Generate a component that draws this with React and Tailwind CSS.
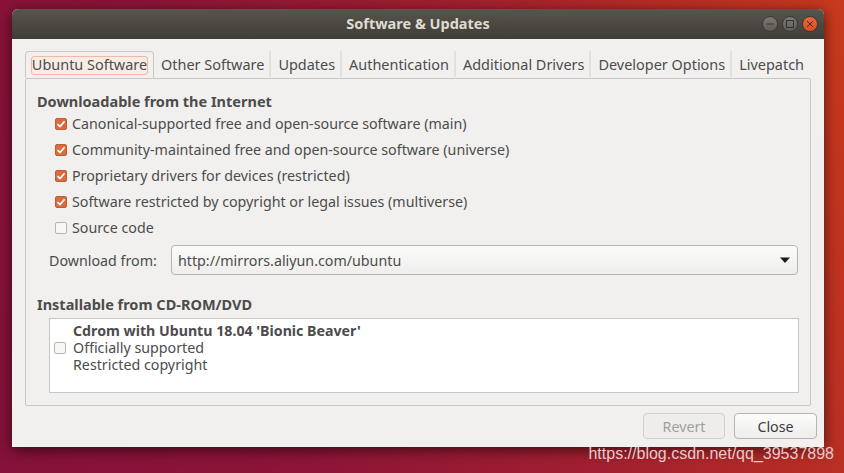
const tabs = ["Other Software", "Updates", "Authentication", "Additional Drivers", "Developer Options", "Livepatch"];

const sources = [
  { label: "Canonical-supported free and open-source software (main)", checked: true },
  { label: "Community-maintained free and open-source software (universe)", checked: true },
  { label: "Proprietary drivers for devices (restricted)", checked: true },
  { label: "Software restricted by copyright or legal issues (multiverse)", checked: true },
  { label: "Source code", checked: false },
];

function Checkbox({ checked }) {
  if (!checked) {
    return <span className="block w-[12px] h-[12px] shrink-0 rounded-[2px] border border-[#b9b6b0] bg-[#f8f7f6]" />;
  }
  return (
    <span className="flex items-center justify-center w-[12px] h-[12px] shrink-0 rounded-[2px] border border-[#b5623c] bg-[#e0693a]">
      <svg width="10" height="10" viewBox="0 0 10 10" fill="none">
        <path d="M1.5 5.2 L4 7.6 L8.6 2.2" stroke="#fff" strokeWidth="1.7" />
      </svg>
    </span>
  );
}

function WindowButton({ close, children }) {
  return (
    <span className={close
      ? "flex items-center justify-center w-[16px] h-[16px] rounded-full border border-[#3d3b35] bg-gradient-to-b from-[#f0643a] to-[#dc4f22]"
      : "flex items-center justify-center w-[16px] h-[16px] rounded-full border border-[#3d3b35] bg-gradient-to-b from-[#7b7972] to-[#5f5d56]"}>
      <svg width="10" height="10" viewBox="0 0 10 10" fill="none" stroke="#34322d" strokeWidth="1">
        {children}
      </svg>
    </span>
  );
}

export default function App() {
  return (
    <div
      className="relative w-[844px] h-[473px] overflow-hidden pt-[9px] px-[12px] bg-[linear-gradient(72deg,#86113a_0%,#8c1438_30%,#a3202f_62%,#bf3320_90%,#c83a1c_100%)] text-[14.25px] text-[#4c4c4c]"
      style={{ fontFamily: '"Noto Sans", sans-serif' }}
    >
      <div className="flex flex-col w-[812px] h-[438px] rounded-t-[6px] bg-[#f1f0ee] shadow-[0_3px_14px_rgba(0,0,0,0.6)]">
        {/* titlebar */}
        <div className="relative flex items-center justify-center h-[30px] shrink-0 rounded-t-[6px] bg-gradient-to-b from-[#57554c] to-[#3f3d37]">
          <span className="text-[14.5px] font-bold text-[#dfdbd2]">Software &amp; Updates</span>
          <div className="absolute right-[6px] top-[7px] flex gap-[4px]">
            <WindowButton>
              <path d="M1.5 5 H8.5" />
            </WindowButton>
            <WindowButton>
              <rect x="1.5" y="1.5" width="7" height="7" />
            </WindowButton>
            <WindowButton close>
              <path d="M2 2 L8 8 M8 2 L2 8" />
            </WindowButton>
          </div>
        </div>

        {/* body */}
        <div className="flex flex-col flex-1 px-[13px] pt-[12px]">
          {/* tabs */}
          <div className="flex h-[27px] shrink-0 items-start text-[14.45px]">
            <div className="w-[129px] h-[27px] px-[5px] pt-[4px] rounded-t-[4px] border border-b-0 border-[#cbc8c3] bg-[#f1f0ee] -mb-px">
              <span className="flex items-center justify-center h-[19px] rounded-[3px] border border-[#f2b8a2] bg-[#f9ece6] leading-none whitespace-nowrap">
                Ubuntu Software
              </span>
            </div>
            {tabs.map((tab) => (
              <div key={tab} className="flex items-center h-[26px] pt-[2px] pl-[7px] pr-[5px] border-r-2 border-[#e3e1de] last:border-r-0 whitespace-nowrap">
                {tab}
              </div>
            ))}
          </div>

          {/* frame */}
          <div className="flex flex-col w-[786px] h-[328px] rounded-[2px] border border-[#c9c7c2] pl-[11px] pr-[12px] pt-[12px]">
            <h2 className="h-[20px] leading-[20px] font-bold text-[14.5px]">Downloadable from the Internet</h2>
            <div className="flex flex-col pl-[18px]">
              {sources.map((s) => (
                <label key={s.label} className="flex items-center gap-[5px] h-[26px] whitespace-nowrap">
                  <Checkbox checked={s.checked} />
                  {s.label}
                </label>
              ))}
            </div>
            <div className="flex items-center mt-[4px] pl-[12px]">
              <span className="w-[122px] pt-[1px]">Download from:</span>
              <div className="flex items-center justify-between flex-1 h-[30px] pl-[6px] pr-[6px] rounded-[4px] border border-[#b7b5b0] bg-gradient-to-b from-[#fbfbfa] to-[#efeeec]">
                <span className="pt-[1px]">http://mirrors.aliyun.com/ubuntu</span>
                <svg width="12" height="8" viewBox="0 0 12 8"><path d="M1 1.5 H11 L6 7 Z" fill="#1c1c1c" /></svg>
              </div>
            </div>
            <h2 className="h-[20px] leading-[20px] mt-[19px] font-bold text-[14.5px]">Installable from CD-ROM/DVD</h2>
            <div className="h-[75px] ml-[12px] -mr-[1px] mt-[4px] pl-[4px] pt-[3px] border border-[#c9c7c2] bg-white">
              <div className="flex items-center">
                <Checkbox checked={false} />
                <div className="ml-[7px]">
                  <div className="h-[17px] leading-[17px] font-bold text-[14.2px]">Cdrom with Ubuntu 18.04 'Bionic Beaver'</div>
                  <div className="h-[17px] leading-[17px]">Officially supported</div>
                  <div className="h-[17px] leading-[17px]">Restricted copyright</div>
                </div>
              </div>
            </div>
          </div>

          {/* buttons */}
          <div className="flex justify-end gap-[9px] mt-[7px] -mr-[6px]">
            <button className="w-[82px] h-[26px] pt-[2px] rounded-[4px] border border-[#d3d1cc] bg-[#eeedeb] text-[#a09f9b]">Revert</button>
            <button className="w-[83px] h-[26px] pt-[2px] rounded-[4px] border border-[#b7b5b0] bg-gradient-to-b from-[#fcfcfb] to-[#eeedeb] text-[#3c3c3c]">Close</button>
          </div>
        </div>
      </div>

      <span
        className="absolute right-[10px] top-[442px] text-[16px] text-[#e9c9c9] whitespace-nowrap"
        style={{ fontFamily: '"Liberation Sans", sans-serif' }}
      >
        https://blog.csdn.net/qq_39537898
      </span>
    </div>
  );
}
